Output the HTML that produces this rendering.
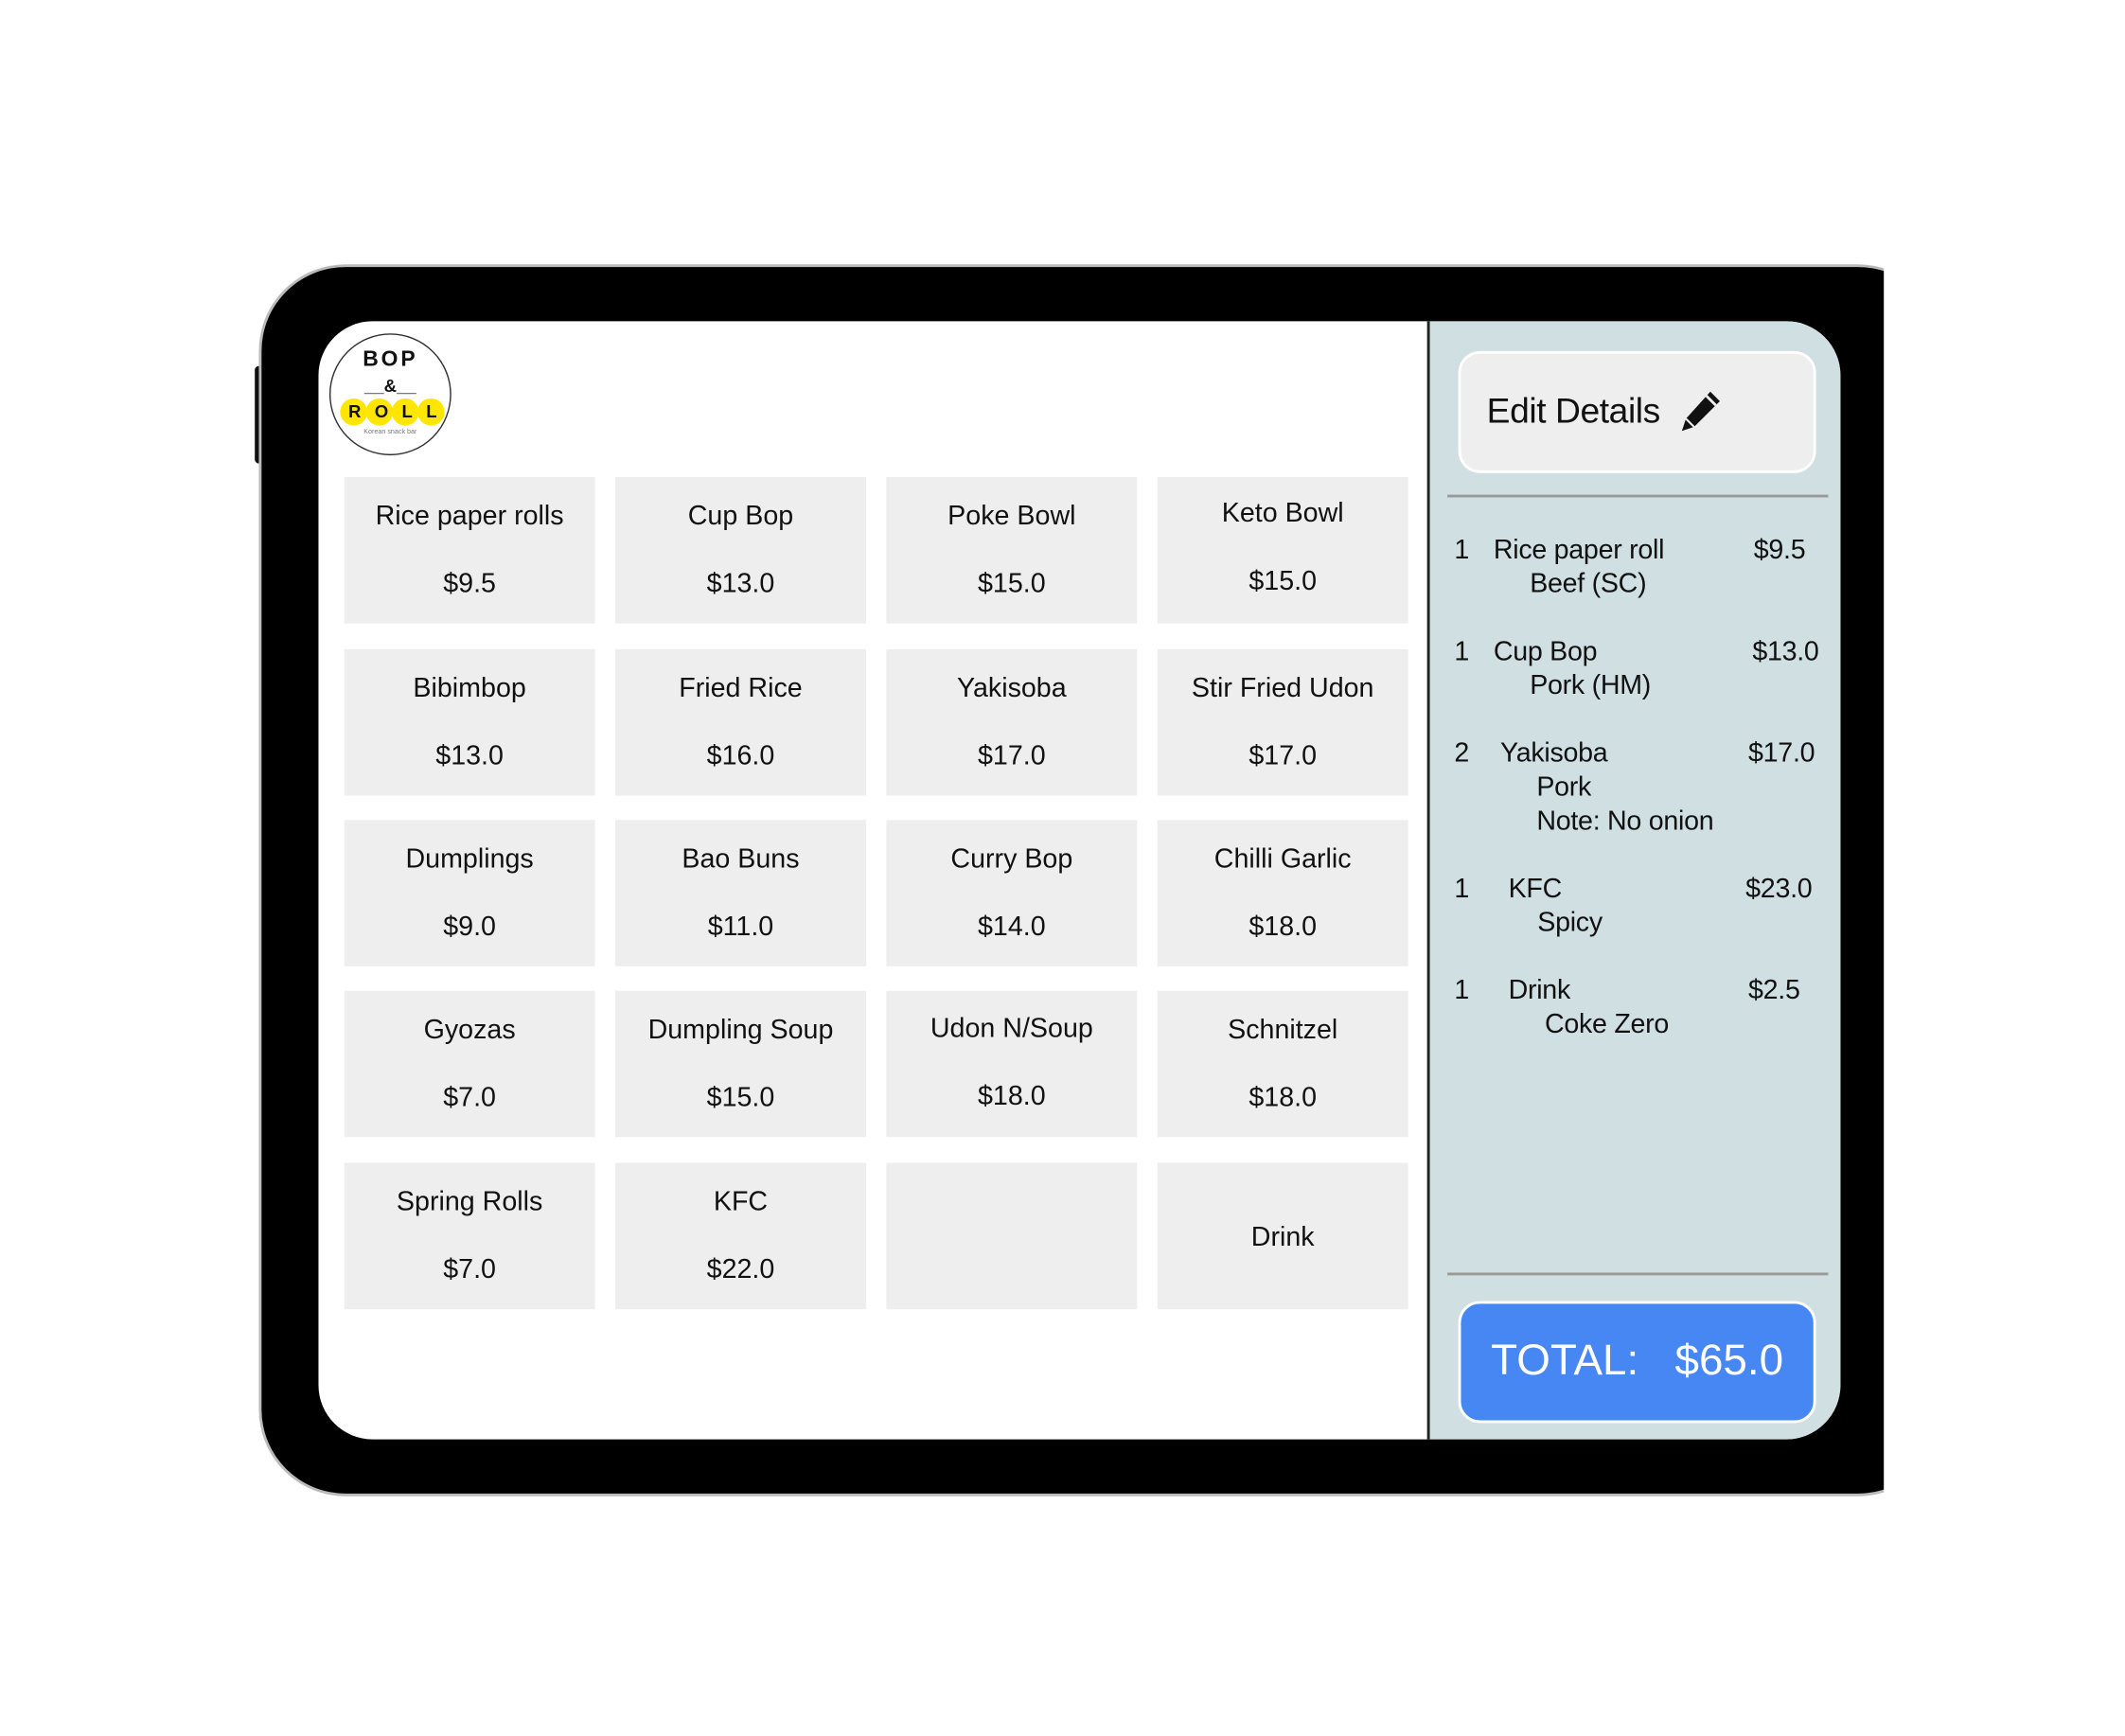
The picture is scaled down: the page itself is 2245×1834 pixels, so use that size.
<!DOCTYPE html>
<html><head><meta charset="utf-8"><style>
html,body{margin:0;padding:0;background:#fff;width:2245px;height:1834px;overflow:hidden}
#w{position:absolute;left:0;top:0;width:1568px;height:1281px;transform:scale(1.4318,1.4318);transform-origin:0 0;font-family:"Liberation Sans",Arial,sans-serif;color:#111}
.a{position:absolute}
.b{position:absolute;width:185px;height:108px;background:#eeeeee;text-align:center;font-size:20px}
.b .n{position:absolute;left:0;right:0;top:18px}
.b .p{position:absolute;left:0;right:0;top:68px}
.o{position:absolute;font-size:20px;line-height:25px;white-space:pre;letter-spacing:-0.2px}
</style></head><body><div id="w">
<div class="a" style="left:188px;top:270px;width:8px;height:72px;background:#111;border-radius:3px"></div>
<div class="a" style="left:193px;top:197px;width:1240px;height:905px;background:#000;border-radius:62px;box-shadow:0 0 0 2px #bbb"></div>
<div class="a" style="left:1390px;top:150px;width:178px;height:1000px;background:#fff"></div>
<div class="a" style="left:235px;top:237px;width:1123px;height:825px;background:#fff;border-radius:40px;overflow:hidden">
  <div class="a" style="left:818px;top:0;width:305px;height:825px;background:#d0dfe2;border-left:2px solid #222"></div>
</div>
<div class="a" style="left:243px;top:246px;width:88px;height:88px;border:1px solid #333;border-radius:50%;background:#fff"></div>
<div class="a" style="left:243px;top:257px;width:90px;text-align:center;font-weight:bold;font-size:16px;letter-spacing:2px">BOP</div>
<div class="a" style="left:243px;top:277px;width:90px;text-align:center;font-weight:bold;font-size:13px">__&amp;__</div>
<div class="a" style="left:251px;top:294px;width:78px;height:20px">
 <div class="a" style="left:0;top:0;width:20px;height:20px;border-radius:50%;background:#ffe600"></div>
 <div class="a" style="left:19px;top:0;width:20px;height:20px;border-radius:50%;background:#ffe600"></div>
 <div class="a" style="left:38px;top:0;width:20px;height:20px;border-radius:50%;background:#ffe600"></div>
 <div class="a" style="left:57px;top:0;width:20px;height:20px;border-radius:50%;background:#ffe600"></div>
 <div class="a" style="left:0;top:2px;width:78px;font-size:13px;font-weight:bold;letter-spacing:10px;padding-left:6px">ROLL</div>
</div>
<div class="a" style="left:243px;top:316px;width:90px;text-align:center;font-size:5px;color:#777">Korean snack bar</div>

<div class="b" style="left:254px;top:352px"><div class="n">Rice paper rolls</div><div class="p">$9.5</div></div>
<div class="b" style="left:454px;top:352px"><div class="n">Cup Bop</div><div class="p">$13.0</div></div>
<div class="b" style="left:654px;top:352px"><div class="n">Poke Bowl</div><div class="p">$15.0</div></div>
<div class="b" style="left:854px;top:352px"><div class="n" style="top:16px">Keto Bowl</div><div class="p" style="top:66px">$15.0</div></div>
<div class="b" style="left:254px;top:479px"><div class="n">Bibimbop</div><div class="p">$13.0</div></div>
<div class="b" style="left:454px;top:479px"><div class="n">Fried Rice</div><div class="p">$16.0</div></div>
<div class="b" style="left:654px;top:479px"><div class="n">Yakisoba</div><div class="p">$17.0</div></div>
<div class="b" style="left:854px;top:479px"><div class="n">Stir Fried Udon</div><div class="p">$17.0</div></div>
<div class="b" style="left:254px;top:605px"><div class="n">Dumplings</div><div class="p">$9.0</div></div>
<div class="b" style="left:454px;top:605px"><div class="n">Bao Buns</div><div class="p">$11.0</div></div>
<div class="b" style="left:654px;top:605px"><div class="n">Curry Bop</div><div class="p">$14.0</div></div>
<div class="b" style="left:854px;top:605px"><div class="n">Chilli Garlic</div><div class="p">$18.0</div></div>
<div class="b" style="left:254px;top:731px"><div class="n">Gyozas</div><div class="p">$7.0</div></div>
<div class="b" style="left:454px;top:731px"><div class="n">Dumpling Soup</div><div class="p">$15.0</div></div>
<div class="b" style="left:654px;top:731px"><div class="n" style="top:17px">Udon N/Soup</div><div class="p" style="top:67px">$18.0</div></div>
<div class="b" style="left:854px;top:731px"><div class="n">Schnitzel</div><div class="p">$18.0</div></div>
<div class="b" style="left:254px;top:858px"><div class="n">Spring Rolls</div><div class="p">$7.0</div></div>
<div class="b" style="left:454px;top:858px"><div class="n">KFC</div><div class="p">$22.0</div></div>
<div class="b" style="left:654px;top:858px"></div>
<div class="b" style="left:854px;top:858px"><div class="n" style="top:44px">Drink</div></div>

<div class="a" style="left:1076px;top:259px;width:260px;height:86px;background:#eeeeee;border:2px solid #fff;border-radius:16px"></div>
<div class="a" style="left:1097px;top:288px;font-size:26px;letter-spacing:-0.3px">Edit Details</div>
<svg class="a" style="left:1238px;top:286px" width="34" height="34" viewBox="0 0 34 34"><path d="M24 3 L31 10 L12 29 L3 32 L6 23 Z" fill="#111"/><path d="M21 6 L28 13" stroke="#eee" stroke-width="2"/><path d="M6 23 L12 29" stroke="#eee" stroke-width="1.5"/></svg>
<div class="a" style="left:1068px;top:365px;width:281px;height:2px;background:#999"></div>

<div class="o" style="left:1073px;top:394px">1</div><div class="o" style="left:1102px;top:394px">Rice paper roll
     Beef (SC)</div><div class="o" style="left:1294px;top:394px">$9.5</div>
<div class="o" style="left:1073px;top:469px">1</div><div class="o" style="left:1102px;top:469px">Cup Bop
     Pork (HM)</div><div class="o" style="left:1293px;top:469px">$13.0</div>
<div class="o" style="left:1073px;top:544px">2</div><div class="o" style="left:1107px;top:544px">Yakisoba
     Pork
     Note: No onion</div><div class="o" style="left:1290px;top:544px">$17.0</div>
<div class="o" style="left:1073px;top:644px">1</div><div class="o" style="left:1113px;top:644px">KFC
    Spicy</div><div class="o" style="left:1288px;top:644px">$23.0</div>
<div class="o" style="left:1073px;top:719px">1</div><div class="o" style="left:1113px;top:719px">Drink
     Coke Zero</div><div class="o" style="left:1290px;top:719px">$2.5</div>

<div class="a" style="left:1068px;top:939px;width:281px;height:2px;background:#999"></div>
<div class="a" style="left:1076px;top:960px;width:260px;height:86px;background:#4687f4;border:2px solid #fff;border-radius:16px"></div>
<div class="a" style="left:1076px;top:985px;width:264px;text-align:center;font-size:32px;color:#fff;white-space:pre">TOTAL:   $65.0</div>
</div></body></html>
